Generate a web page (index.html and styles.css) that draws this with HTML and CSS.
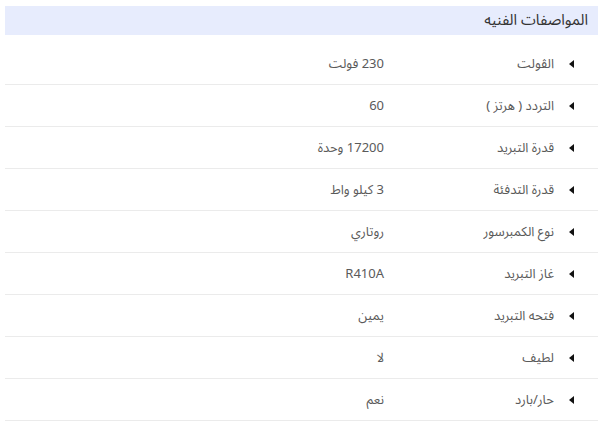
FILE: index.html
```html
<!DOCTYPE html>
<html lang="ar" dir="rtl">
<head>
<meta charset="utf-8">
<link rel="stylesheet" href="styles.css">
</head>
<body>
<div class="specs">
  <h2 class="specs-title">المواصفات الفنيه</h2>
  <ul class="spec-list">
    <li class="spec-row"><span class="spec-label"><i class="caret"></i>الڤولت</span><span class="spec-value">230 فولت</span></li>
    <li class="spec-row"><span class="spec-label"><i class="caret"></i>التردد ( هرتز )</span><span class="spec-value">60</span></li>
    <li class="spec-row"><span class="spec-label"><i class="caret"></i>قدرة التبريد</span><span class="spec-value">17200 وحدة</span></li>
    <li class="spec-row"><span class="spec-label"><i class="caret"></i>قدرة التدفئة</span><span class="spec-value">3 كيلو واط</span></li>
    <li class="spec-row"><span class="spec-label"><i class="caret"></i>نوع الكمبرسور</span><span class="spec-value">روتاري</span></li>
    <li class="spec-row"><span class="spec-label"><i class="caret"></i>غاز التبريد</span><span class="spec-value">R410A</span></li>
    <li class="spec-row"><span class="spec-label"><i class="caret"></i>فتحه التبريد</span><span class="spec-value">يمين</span></li>
    <li class="spec-row"><span class="spec-label"><i class="caret"></i>لطيف</span><span class="spec-value">لا</span></li>
    <li class="spec-row"><span class="spec-label"><i class="caret"></i>حار/بارد</span><span class="spec-value">نعم</span></li>
  </ul>
</div>
</body>
</html>
```
FILE: styles.css
```css
html, body {
  margin: 0;
  padding: 0;
  background: #fff;
}
body {
  font-family: "Noto Sans Arabic", "Noto Sans", "DejaVu Sans", sans-serif;
  color: #5a5a5a;
}
.specs {
  padding: 6px 4px 0 5px;
}
.specs-title {
  margin: 0;
  height: 29px;
  background: #e7ecfd;
  color: #333;
  font-size: 15px;
  font-weight: normal;
  line-height: 29px;
  padding: 0 10px 0 0;
}
.spec-list {
  list-style: none;
  margin: 8px 0 0;
  padding: 0;
}
.spec-row {
  display: flex;
  align-items: center;
  height: 41px;
  border-bottom: 1px solid #ebebeb;
  font-size: 13px;
}
.spec-label {
  display: flex;
  align-items: center;
  width: 214px;
  padding-right: 24px;
  box-sizing: border-box;
}
.caret {
  display: inline-block;
  width: 0;
  height: 0;
  border-top: 4px solid transparent;
  border-bottom: 4px solid transparent;
  border-right: 5px solid #111;
  margin-left: 15px;
}
.spec-value {
  flex: 1;
}
```
